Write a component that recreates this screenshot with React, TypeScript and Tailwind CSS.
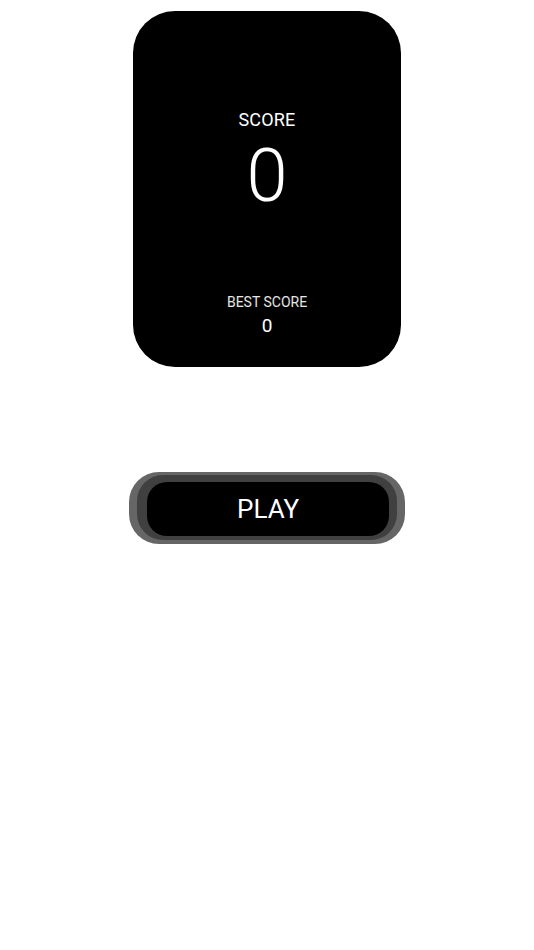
import React from 'react';

const font = { fontFamily: 'Roboto, "Liberation Sans", sans-serif' };

function ScoreCard({ score, best }: { score: number; best: number }) {
    return (
        <div className="w-[268px] h-[356px] rounded-[42px] bg-black text-white flex flex-col items-center">
            {/* Current score */}
            <div className="mt-[98px] text-[18px] leading-[22px] tracking-[0.2px]">SCORE</div>
            <div className="mt-[5px] text-[74px] leading-[80px] font-light">{score}</div>

            {/* Best score */}
            <div className="mt-auto text-[14px] leading-[18px] text-white/90">BEST SCORE</div>
            <div className="mt-[4px] mb-[30px] text-[19px] leading-[22px]">{best}</div>
        </div>
    );
}

function PlayButton() {
    return (
        <button className="w-[276px] h-[72px] rounded-[30px] bg-[#666666] pl-[8px] pr-[8px] pt-[3px] pb-[4px]">
            <div className="w-full h-full rounded-[26px] bg-[#404040] pl-[10px] pr-[8px] pt-[7px] pb-[4px]">
                <div className="w-full h-full rounded-[20px] bg-black flex items-center justify-center text-white text-[26px] leading-none">
                    PLAY
                </div>
            </div>
        </button>
    );
}

export default function App() {
    return (
        <div className="min-h-[950px] bg-white flex flex-col items-center pt-[11px]" style={font}>
            <ScoreCard score={0} best={0} />
            <div className="mt-[105px]">
                <PlayButton />
            </div>
        </div>
    );
}
